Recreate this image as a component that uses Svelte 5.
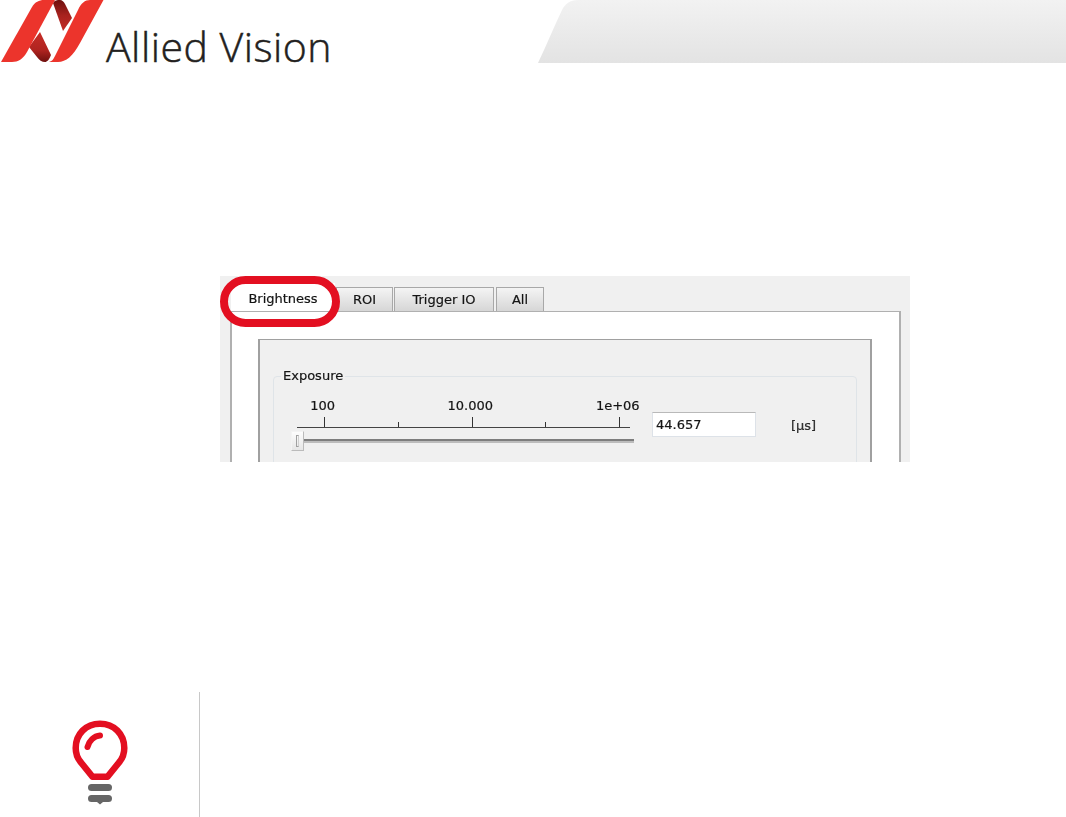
<script>
  const tabs = ['ROI', 'Trigger IO', 'All'];
  const labels = ['100', '10.000', '1e+06'];
  const ticks = [true, false, true, false, true];
</script>

<div class="page">
  <header class="head">
    <div class="brand">
      <svg class="mark" width="104" height="63" viewBox="0 0 104 63" aria-hidden="true">
        <defs>
          <linearGradient id="d1" x1="0" y1="0" x2="0" y2="1">
            <stop offset="0" stop-color="#6f100e" />
            <stop offset="0.5" stop-color="#a8221e" />
            <stop offset="1" stop-color="#c32b25" />
          </linearGradient>
          <linearGradient id="d2" x1="0" y1="0" x2="0" y2="1">
            <stop offset="0" stop-color="#c72d27" />
            <stop offset="0.6" stop-color="#b02420" />
            <stop offset="1" stop-color="#6f100e" />
          </linearGradient>
        </defs>
        <path fill="url(#d1)" d="M53 3 C55 0 57 0 60 0 C62 0 64 2 65 4 L72 18 L63 31 Z" />
        <path fill="url(#d2)" d="M40 32 L51 55 C49 60 47 62 45 62 C42 62 39 60 37 57 L29 47 Z" />
        <path fill="#ec342c" d="M1 62 L32 7 C35 2 39 0 44 0 H55 L27 52 C23 59 18 62 12 62 Z" />
        <path fill="#ec342c" d="M49 62 C52 61 53 60 55 56 L78 10 C81 3 85 0 90 0 H103.500 L80 43 C73 56 66 62 58 62 Z" />
      </svg>
      <span class="word">Allied Vision</span>
    </div>
    <svg class="swoosh" width="528" height="63" viewBox="0 0 528 63" aria-hidden="true">
      <defs>
        <linearGradient id="sw" x1="0" y1="0" x2="0" y2="1">
          <stop offset="0" stop-color="#f2f2f2" />
          <stop offset="1" stop-color="#e3e3e3" />
        </linearGradient>
      </defs>
      <path fill="url(#sw)" d="M0 63 C8 46 16 27 24 10 C27 4 32 0 40 0 H528 V63 Z" />
    </svg>
  </header>

  <section class="shot">
    <div class="tabs">
      <div class="tab active">Brightness</div>
      {#each tabs as t}
        <div class="tab">{t}</div>
      {/each}
    </div>
    <div class="pane">
      <div class="panel">
        <fieldset class="group">
          <legend>Exposure</legend>
          <div class="control">
            <div class="slider">
              <div class="labels">
                {#each labels as l}
                  <span class="lab">{l}</span>
                {/each}
              </div>
              <div class="scale">
                {#each ticks as major}
                  <i class="tick" class:major></i>
                {/each}
              </div>
              <div class="track">
                <div class="thumb"><b></b></div>
                <div class="groove"></div>
              </div>
            </div>
            <div class="input">44.657</div>
            <div class="unit">[µs]</div>
          </div>
        </fieldset>
      </div>
    </div>
    <div class="ring"></div>
  </section>

  <section class="tip">
    <div class="icon">
      <svg width="60" height="88" viewBox="0 0 60 88" aria-hidden="true">
        <path fill="none" stroke="#e30f21" stroke-width="6.500" stroke-linejoin="round" d="M30 5.700 C16 5.700 5.700 16 5.700 30 C5.700 36 7.500 40.500 11 44.500 L22.500 58.800 H37.500 L49 44.500 C52.500 40.500 54.300 36 54.300 30 C54.300 16 44 5.700 30 5.700 Z" />
        <path fill="none" stroke="#e30f21" stroke-width="6" stroke-linecap="round" d="M17.500 29 C19 23 24 18 30 17.500" />
        <rect x="18" y="66" width="24" height="7" rx="3.500" fill="#666" />
        <path fill="#666" d="M21.500 77 H38.500 a3.500 3.500 0 0 1 0 7 H33 L30 86.500 L27 84 H21.500 a3.500 3.500 0 0 1 0 -7 Z" />
      </svg>
    </div>
    <div class="body"></div>
  </section>
</div>

<style>
  :global(body) {
    margin: 0;
    background: #fff;
  }
  .page {
    width: 1066px;
    height: 817px;
    overflow: hidden;
    display: flex;
    flex-direction: column;
  }
  .head {
    height: 63px;
    display: flex;
    justify-content: space-between;
    flex: none;
  }
  .brand {
    display: flex;
    align-items: flex-start;
    gap: 2px;
  }
  .mark {
    display: block;
  }
  .word {
    font-family: "Open Sans", sans-serif;
    font-weight: 300;
    font-size: 41px;
    line-height: 54px;
    letter-spacing: 0.5px;
    color: #231f20;
    padding-top: 19px;
    -webkit-text-stroke: 0.5px #231f20;
  }
  .swoosh {
    display: block;
  }
  .shot {
    position: relative;
    flex: none;
    width: 690px;
    height: 186px;
    margin: 213px 0 0 220px;
    background: #f0f0f0;
    overflow: hidden;
    font-family: "DejaVu Sans", sans-serif;
    font-size: 13px;
    color: #141414;
    -webkit-text-stroke: 0.2px #141414;
    filter: blur(0.35px);
  }
  .tabs {
    display: flex;
    height: 35px;
    padding: 0 0 0 11px;
    align-items: flex-end;
    gap: 1px;
  }
  .tab {
    height: 24px;
    box-sizing: border-box;
    border: 1px solid #a8a8a8;
    border-bottom: 0;
    padding-top: 4px;
    background: linear-gradient(#f4f4f4, #d6d6d6);
    text-align: center;
    width: 57px;
  }
  .tab:nth-child(3) {
    width: 100px;
  }
  .tab:nth-child(4) {
    width: 48px;
    margin-left: 1px;
  }
  .tab.active {
    width: 104px;
    height: 28px;
    background: #fff;
    border: 0;
    padding-top: 8px;
  }
  .pane {
    margin: 0 9px 0 10px;
    height: 200px;
    box-sizing: border-box;
    background: #fff;
    border: 2px solid #b0b0b0;
    border-top-width: 1px;
    border-bottom: 0;
    padding: 27px 27px 0 26px;
  }
  .panel {
    height: 160px;
    box-sizing: border-box;
    background: #f0f0f0;
    border: 2px solid #a0a0a0;
    border-top-width: 1px;
    padding: 29px 13px 0 13px;
  }
  .group {
    margin: 0;
    height: 120px;
    box-sizing: border-box;
    border: 1px solid #dfe4e8;
    border-radius: 4px;
    padding: 0 0 0 18px;
  }
  legend {
    padding: 0 2px;
    margin-left: -11px;
    line-height: 14px;
    font-size: 13px;
  }
  .control {
    display: flex;
    align-items: flex-start;
  }
  .slider {
    width: 343px;
    flex: none;
    margin-left: -1px;
  }
  .labels {
    display: grid;
    grid-template-columns: repeat(3, 1fr);
    width: 442.500px;
    height: 14px;
    margin-left: -42px;
    padding-top: 15px;
    line-height: 16px;
    text-align: center;
  }
  .lab {
    display: block;
  }
  .scale {
    height: 12px;
    margin: 4px 4px 0 6px;
    padding: 0 10px 0 27px;
    display: flex;
    justify-content: space-between;
    align-items: flex-end;
    border-bottom: 1px solid #444;
    box-sizing: border-box;
  }
  .tick {
    display: block;
    width: 1px;
    height: 5px;
    background: #333;
  }
  .tick.major {
    height: 10px;
  }
  .track {
    position: relative;
    display: flex;
    align-items: center;
    height: 20px;
    margin-top: 3px;
  }
  .thumb {
    flex: none;
    width: 13px;
    height: 20px;
    box-sizing: border-box;
    background: linear-gradient(#fdfdfd, #e6e6e6);
    border: 1px solid #f4f4f4;
    border-right-color: #bbb;
    border-bottom-color: #bbb;
    display: flex;
    justify-content: center;
    padding: 3px 0;
  }
  .thumb b {
    display: block;
    width: 3px;
    box-sizing: border-box;
    border: 1px solid #a0a0a0;
    border-right-color: #d0d0d0;
  }
  .groove {
    flex: 1;
    height: 4px;
    box-sizing: border-box;
    background: #7d7d7d;
    border-bottom: 2px solid #bcbcbc;
  }
  .input {
    flex: none;
    width: 104px;
    height: 25px;
    box-sizing: border-box;
    margin: 29px 0 0 18px;
    padding: 0 3px;
    background: #fff;
    border: 1px solid #dde2e8;
    border-top-color: #b9b9b9;
    line-height: 24px;
  }
  .unit {
    margin: 30px 0 0 35px;
    line-height: 25px;
    color: #333;
  }
  .ring {
    position: absolute;
    left: 0;
    top: 0;
    width: 120px;
    height: 51px;
    box-sizing: border-box;
    border: 8px solid #e30f21;
    border-radius: 26px;
  }
  .tip {
    flex: 1;
    margin-top: 230px;
    display: flex;
  }
  .icon {
    width: 200px;
    box-sizing: border-box;
    padding: 26px 0 0 70px;
    border-right: 1px solid #c8c8c8;
  }
  .icon svg {
    display: block;
  }
  .body {
    flex: 1;
  }
</style>
